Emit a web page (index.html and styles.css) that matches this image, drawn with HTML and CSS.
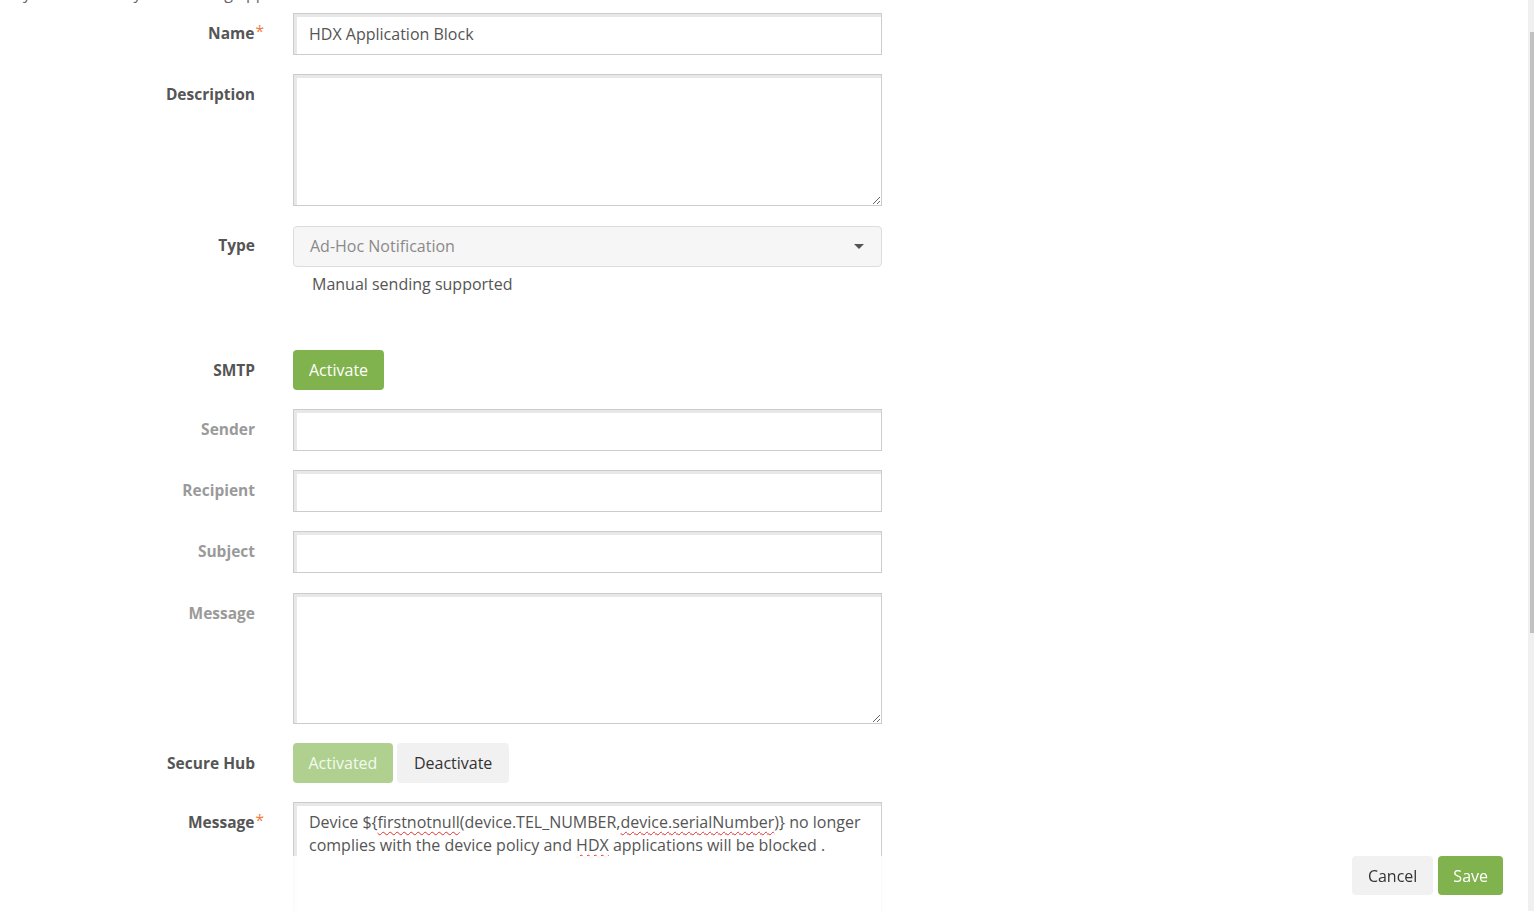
FILE: index.html
```html
<!DOCTYPE html>
<html lang="en">
<head>
<meta charset="utf-8">
<title>Notification</title>
<link rel="stylesheet" href="styles.css">
</head>
<body>
<div class="page">
  <p class="intro">Any notification by the sending app</p>
  <form class="form">
    <label class="lbl">Name<span class="req">*</span></label>
    <div class="field"><div class="input">HDX Application Block</div></div>

    <label class="lbl">Description</label>
    <div class="field"><textarea class="input area"></textarea></div>

    <label class="lbl lbl-type">Type</label>
    <div class="field field-type">
      <div class="select"><span>Ad-Hoc Notification</span><span class="caret"></span></div>
      <p class="help">Manual sending supported</p>
    </div>

    <label class="lbl">SMTP</label>
    <div class="field"><button type="button" class="btn btn-green">Activate</button></div>

    <label class="lbl dim">Sender</label>
    <div class="field"><div class="input"></div></div>

    <label class="lbl dim">Recipient</label>
    <div class="field"><div class="input"></div></div>

    <label class="lbl dim">Subject</label>
    <div class="field"><div class="input"></div></div>

    <label class="lbl dim lbl-msg">Message</label>
    <div class="field field-msg"><textarea class="input area area-short"></textarea></div>

    <label class="lbl">Secure Hub</label>
    <div class="field btn-row">
      <button type="button" class="btn btn-light-green">Activated</button>
      <button type="button" class="btn btn-grey">Deactivate</button>
    </div>

    <label class="lbl">Message<span class="req">*</span></label>
    <div class="field"><div class="input area msg">Device ${<span class="sp">firstnotnull</span>(device.TEL_NUMBER,<span class="sp">device.serialNumber</span>)} no longer complies with the device policy and <span class="sp">HDX</span> applications will be blocked .</div></div>
  </form>
</div>

<div class="footer">
  <button type="button" class="btn btn-grey">Cancel</button>
  <button type="button" class="btn btn-green">Save</button>
</div>

<div class="scrollbar"><div class="thumb"></div></div>
</body>
</html>
```

FILE: styles.css
```css
* { box-sizing: border-box; }

html, body {
  margin: 0;
  padding: 0;
  height: 100%;
  overflow: hidden;
  background: #ffffff;
  font-family: "Open Sans", "Noto Sans", sans-serif;
  font-size: 16px;
  color: #555555;
}

.intro {
  margin: -17px 0 10px 0;
  padding-left: 3px;
  line-height: 20px;
  color: #666666;
}

.form {
  display: grid;
  grid-template-columns: 255px 589px;
  column-gap: 38px;
  row-gap: 19px;
  align-items: start;
}

.lbl {
  display: block;
  text-align: right;
  font-weight: 700;
  font-size: 15.5px;
  color: #555555;
  padding-top: 10px;
  line-height: 20px;
  white-space: nowrap;
}

.lbl.dim {
  color: #9a9a9a;
}

.lbl-type,
.field-type,
.lbl-msg,
.field-msg {
  margin-top: 1px;
}

.lbl-type {
  margin-top: 0;
}

.req {
  color: #f5793b;
  margin-right: -9px;
  margin-left: 1px;
  font-weight: 400;
  position: relative;
  top: -2px;
}

.field {
  min-width: 0;
}

.input {
  display: block;
  width: 100%;
  height: 42px;
  margin: 0;
  padding: 9px 15px;
  border: 1px solid #cccccc;
  border-radius: 0;
  box-shadow: inset 3px 3px 0 #e8e8e8;
  background: #ffffff;
  font-family: inherit;
  font-size: 16px;
  line-height: 22px;
  color: #555555;
}

.area {
  height: 132px;
  resize: vertical;
}

.area-short {
  height: 131px;
}

.msg {
  height: 140px;
  padding-top: 8px;
  line-height: 23px;
}

.sp {
  text-decoration: underline wavy #e03030;
  text-decoration-thickness: 1px;
  text-underline-offset: 3px;
  text-decoration-skip-ink: none;
}

.select {
  display: flex;
  align-items: center;
  justify-content: space-between;
  height: 41px;
  padding: 0 17px 1px 16px;
  border: 1px solid #dddddd;
  border-radius: 4px;
  background: #f6f6f6;
  color: #8a8a8a;
}

.caret {
  width: 0;
  height: 0;
  border-left: 5px solid transparent;
  border-right: 5px solid transparent;
  border-top: 5px solid #555555;
}

.help {
  margin: 6px 0 36px 19px;
  line-height: 22px;
  color: #555555;
}

.btn {
  height: 40px;
  padding: 0 16px;
  border: 0;
  border-radius: 4px;
  font-family: inherit;
  font-size: 16px;
  cursor: pointer;
}

.btn-green {
  background: #80b34d;
  color: #ffffff;
}

.btn-light-green {
  background: #b0d08f;
  color: #f4faef;
}

.btn-row .btn-light-green {
  padding: 0 15.5px;
}

.btn-grey {
  background: #f1f1f1;
  color: #333333;
  padding: 0 17px;
}

.btn-row {
  display: flex;
  gap: 4px;
}

.footer {
  position: fixed;
  left: 0;
  right: 0;
  bottom: 0;
  height: 55px;
  padding: 0 31px 0 0;
  display: flex;
  justify-content: flex-end;
  align-items: flex-start;
  gap: 5px;
  background: rgba(255, 255, 255, 0.9);
}

.footer .btn {
  height: 39px;
  padding: 0 15px;
}

.footer .btn-grey {
  padding: 0 16px;
}

.scrollbar {
  position: fixed;
  top: 0;
  right: 0;
  bottom: 0;
  width: 6px;
  background: #f0f0f0;
}

.thumb {
  margin: 32px 0 0 2px;
  width: 4px;
  height: 601px;
  background: #c1c1c1;
}
```
